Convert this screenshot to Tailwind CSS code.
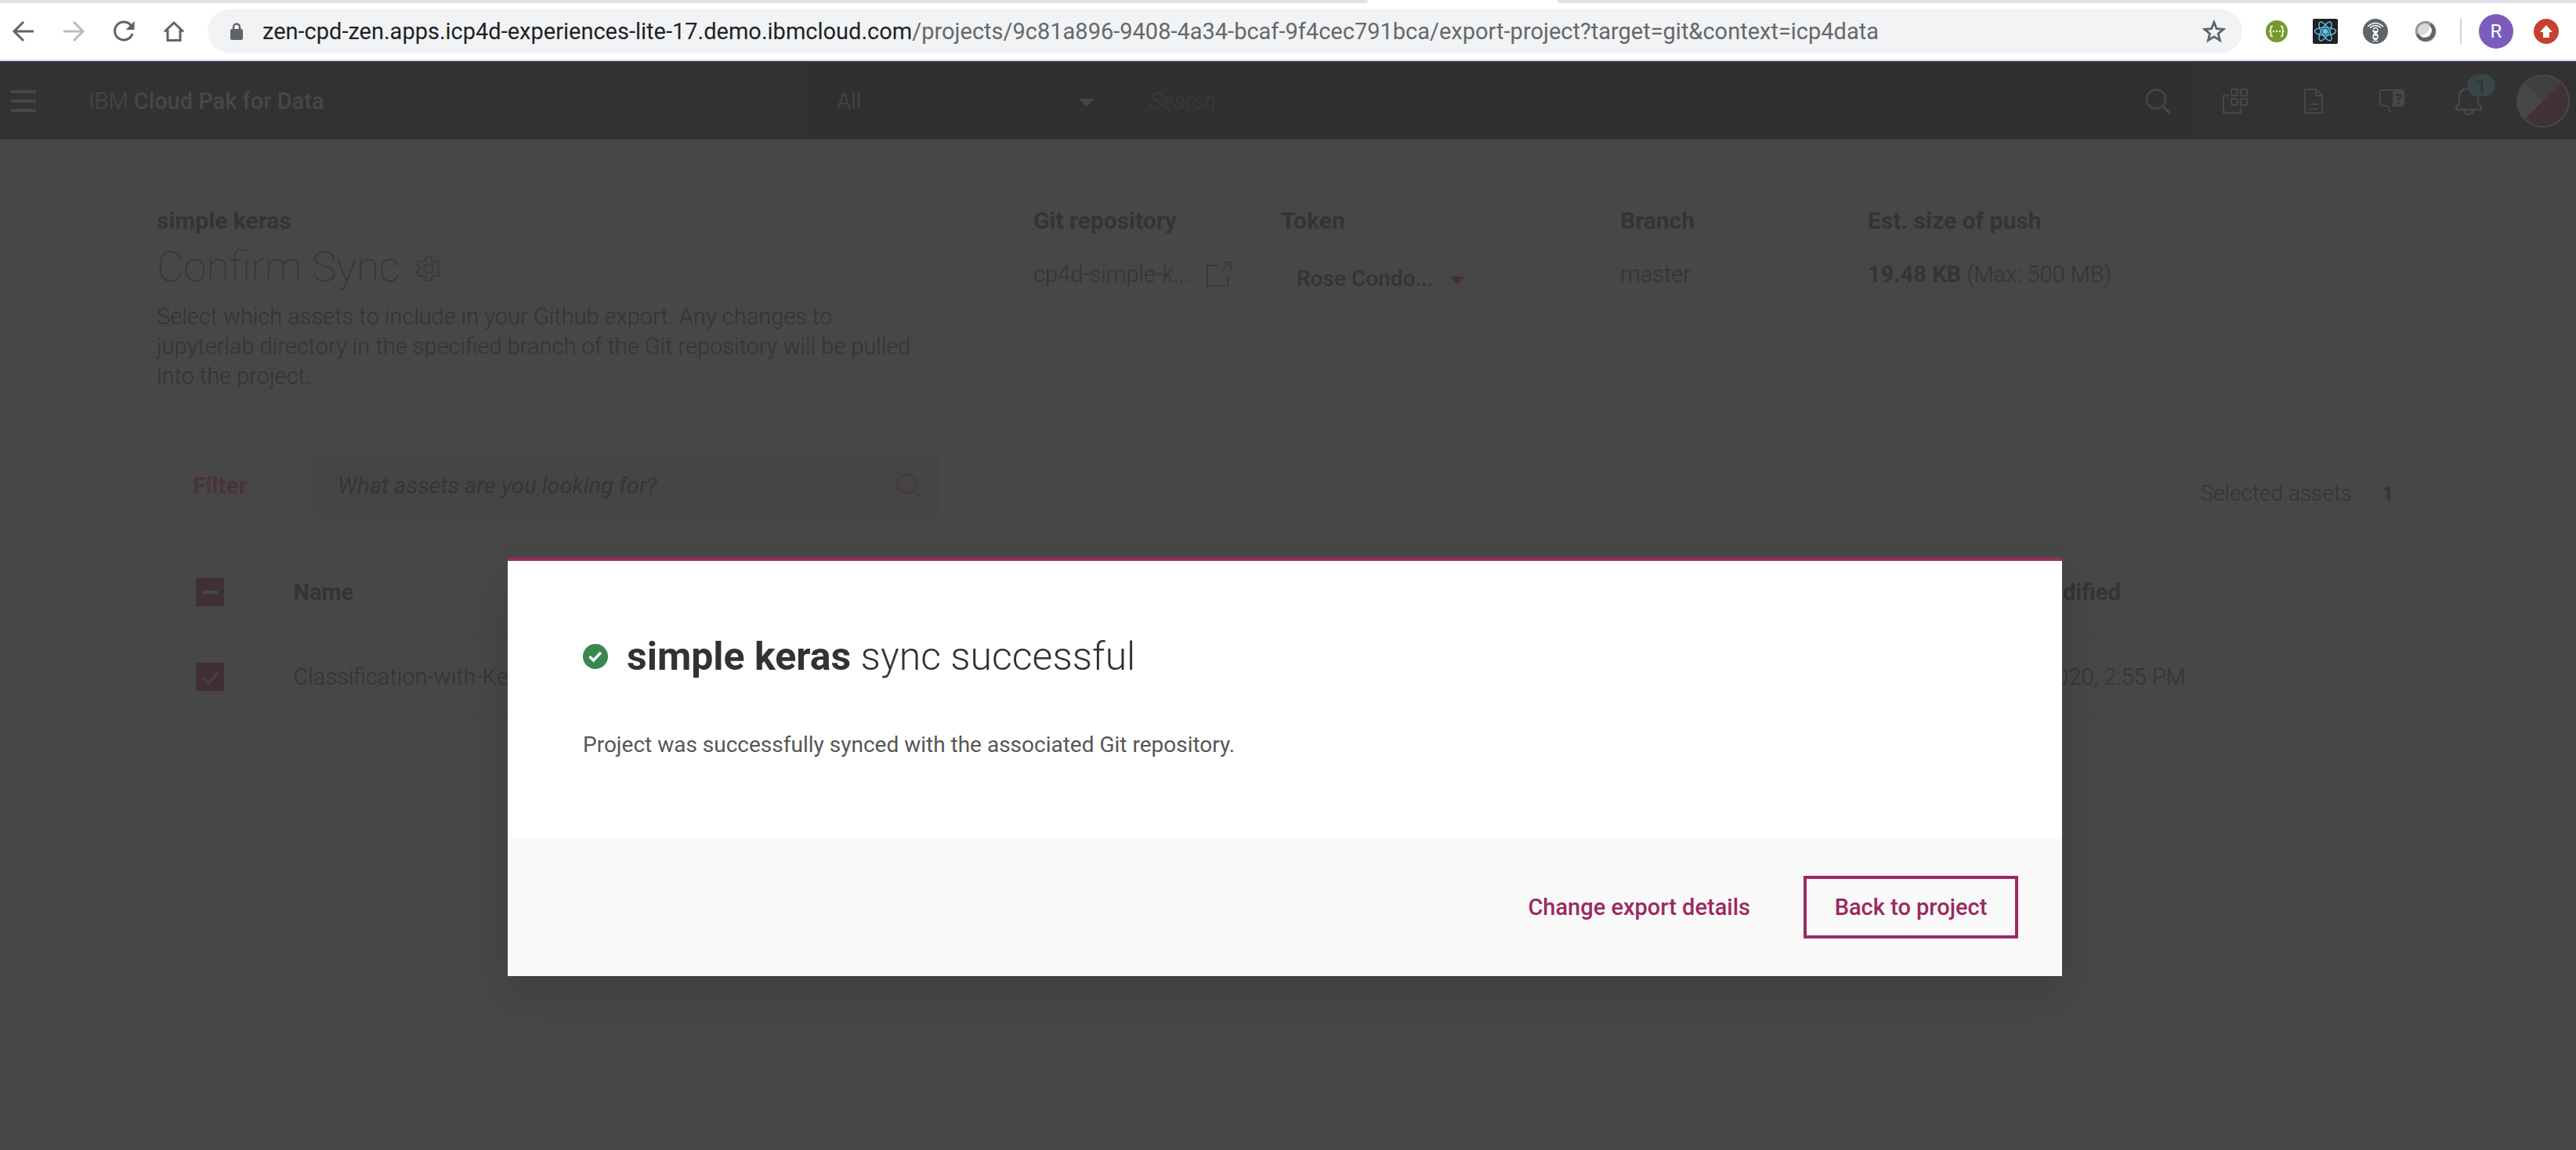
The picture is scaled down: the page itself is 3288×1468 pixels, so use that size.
<!DOCTYPE html>
<html lang="en">
<head>
<meta charset="utf-8">
<title>Confirm Sync - IBM Cloud Pak for Data</title>
<script src="https://cdn.jsdelivr.net/npm/@tailwindcss/browser@4"></script>
</head>
<body class="flex min-h-screen flex-col bg-[#474747] font-['Roboto','Noto_Sans',sans-serif] text-[29px] leading-[38px] text-[#343434]">

<!-- Browser toolbar -->
<div class="flex h-1 bg-white">
  <div class="grow-[1746] basis-0 rounded-br-lg bg-[#dee1e6]"></div>
  <div class="grow-[242] basis-0"></div>
  <div class="grow-[1300] basis-0 rounded-bl-lg bg-[#dee1e6]"></div>
</div>
<div class="flex h-[74px] items-center border-b-2 border-[#dadce0] bg-white pl-[14px] pr-[22px]">
  <div class="flex items-center gap-8 text-[#5f6368]">
    <button aria-label="Back"><svg class="h-8 w-8" viewBox="0 0 32 32" fill="none" stroke="currentColor" stroke-width="3"><path d="M29 16H5M16 4 4 16l12 12"/></svg></button>
    <button aria-label="Forward" class="text-[#babcbe]"><svg class="h-8 w-8" viewBox="0 0 32 32" fill="none" stroke="currentColor" stroke-width="3"><path d="M3 16h24M16 4l12 12-12 12"/></svg></button>
    <button aria-label="Reload"><svg class="h-8 w-8" viewBox="0 0 32 32" fill="none" stroke="currentColor" stroke-width="3"><path d="M25.500 9A11.500 11.500 0 1 0 27 19"/><path d="M29.500 3v11h-11z" fill="currentColor" stroke="none"/></svg></button>
    <button aria-label="Home"><svg class="h-8 w-8" viewBox="0 0 32 32" fill="none" stroke="currentColor" stroke-width="3"><path d="M4 16.500 16 5l12 11.500M8 14v13.500h16V14"/></svg></button>
  </div>
  <div class="ml-[27px] flex h-14 min-w-0 flex-1 items-center rounded-full bg-[#f1f3f4] pl-[28px] pr-5">
    <svg class="h-6 w-[18px] shrink-0 text-[#5f6368]" viewBox="0 0 18 24" fill="none"><path d="M5 10V6.500a4 4 0 0 1 8 0V10" stroke="currentColor" stroke-width="2.400"/><rect x="1" y="9" width="16" height="14" rx="2" fill="currentColor"/></svg>
    <a href="#" class="ml-6 min-w-0 flex-1 overflow-hidden whitespace-nowrap text-[#65686c]"><span class="text-[#202124]">zen-cpd-zen.apps.icp4d-experiences-lite-17.demo.ibmcloud.com</span>/projects/9c81a896-9408-4a34-bcaf-9f4cec791bca/export-project?target=git&amp;context=icp4data</a>
    <button aria-label="Bookmark"><svg class="h-8 w-8" viewBox="0 0 32 32" fill="none" stroke="#5f6368" stroke-width="2.800"><path d="m16 4.500 3.300 8.200 8.700.6-6.700 5.600 2.200 8.600L16 22.800l-7.500 4.700 2.200-8.600L4 13.300l8.700-.6z"/></svg></button>
  </div>
  <div class="ml-[30px] flex items-center gap-8">
    <svg class="h-8 w-7" viewBox="0 0 28 32" fill="none" stroke="#fff" stroke-width="1.600"><circle cx="14" cy="16" r="14" fill="#76992b" stroke="none"/><path d="M9 9.500H8q-1.500 0-1.500 2v2.500q0 2-2 2 2 0 2 2V20.500q0 2 1.500 2h1M19 9.500h1q1.500 0 1.500 2v2.500q0 2 2 2-2 0-2 2V20.500q0 2-1.500 2h-1"/><path d="M9 16h10" stroke-width="2" stroke-dasharray="2 2"/></svg>
    <svg class="h-8 w-8" viewBox="0 0 32 32" fill="none" stroke="#61c3ea" stroke-width="1.400"><rect width="32" height="32" rx="2" fill="#202122" stroke="none"/><ellipse cx="16" cy="16" rx="13.500" ry="5"/><ellipse cx="16" cy="16" rx="13.500" ry="5" transform="rotate(60 16 16)"/><ellipse cx="16" cy="16" rx="13.500" ry="5" transform="rotate(120 16 16)"/><circle cx="16" cy="16" r="2.800" fill="#61c3ea"/></svg>
    <svg class="h-8 w-8" viewBox="0 0 32 32" fill="none" stroke="#fff" stroke-width="1.500"><circle cx="16" cy="16" r="16" fill="#5f6468" stroke="none"/><path d="M6 10q10-9 20 0M9 11.500q7-6 14 0M13 13q3-3 6 0M13 14q0 3 3 4.500t3 4.500q0 3-6 6M19 14q0 3-3 4.500T13 23q0 3 6 6M13 16h6M13.500 21h5M13.500 25h5"/></svg>
    <svg class="h-8 w-8" viewBox="0 0 32 32"><circle cx="17" cy="17" r="13.500" fill="#e4e4e4"/><circle cx="16" cy="16" r="13" fill="#646464"/><path d="M4 21A13 13 0 0 1 24 6z" fill="#9b9b9b"/><circle cx="15" cy="15" r="9" fill="#dadada"/><path d="M9 21q12-1 12-12l3 5-3 8-8 2z" fill="#fff"/></svg>
  </div>
  <div class="ml-7 flex items-center">
    <span class="h-8 w-[2px] bg-[#cfd1d4]"></span>
    <button class="ml-[22px] h-11 w-11 rounded-full bg-[#7b5cbb] text-[24px] leading-[44px] text-white">R</button>
    <svg class="ml-[26px] h-8 w-8" viewBox="0 0 32 32"><circle cx="16" cy="16" r="16" fill="#c5402f"/><path d="m16 8 8 9h-4v7h-8v-7H8z" fill="#fff"/></svg>
  </div>
</div>

<div class="relative flex flex-1 flex-col border-t border-[#2e4068]">
  <!-- Product header -->
  <header class="flex h-[99px] items-stretch bg-[#323232] text-[#474747]">
    <div class="flex flex-1 items-center pl-[14px]">
      <button aria-label="Menu" class="mr-[67px] flex w-8 flex-col gap-2"><span class="h-1 bg-[#474747]"></span><span class="h-1 bg-[#474747]"></span><span class="h-1 bg-[#474747]"></span></button>
      <a href="#" class="whitespace-nowrap"><span class="font-light">IBM</span> <b class="font-medium">Cloud Pak for Data</b></a>
    </div>
    <div class="flex min-w-0 max-w-[1768px] grow-[1768] basis-0 items-center bg-[#303030]">
      <div class="flex h-full w-[400px] items-center justify-between border-r-2 border-[#323232] pl-[35px] pr-[34px]">
        <select aria-label="Category" class="h-10 flex-1 appearance-none bg-transparent font-light text-[#474747]"><option>All</option></select>
        <svg class="mt-1 h-[10px] w-5" viewBox="0 0 20 10"><path d="M0 0h20L10 10z" fill="#474747"/></svg>
      </div>
      <input type="text" aria-label="Search" placeholder="Search" class="ml-[34px] h-10 min-w-0 flex-1 bg-transparent font-light italic placeholder:text-[#3b3b3b]">
      <button aria-label="Run search" class="mr-[30px]"><svg class="h-8 w-8" viewBox="0 0 32 32" fill="none" stroke="#474747" stroke-width="2.400"><circle cx="13" cy="13.500" r="12"/><path d="m21 22 9.500 9.500" stroke-width="3"/></svg></button>
    </div>
    <div class="flex items-center gap-[68px] pl-[36px] pr-[29px] text-[#474747]">
      <button aria-label="Apps"><svg class="h-8 w-8" viewBox="0 0 32 32" fill="none" stroke="currentColor" stroke-width="2"><rect x="11" y="1" width="8" height="8" rx="1"/><rect x="23" y="1" width="8" height="8" rx="1"/><rect x="11" y="13" width="8" height="8" rx="1"/><rect x="23" y="13" width="8" height="8" rx="1"/><path d="M8 9H1v22h22v-7"/></svg></button>
      <button aria-label="Documents"><svg class="h-8 w-8" viewBox="0 0 32 32" fill="none" stroke="currentColor" stroke-width="2"><path d="M5 1h14l8 8v22H5zM19 1v8h8M10 20h12M10 26h12"/></svg></button>
      <button aria-label="Help"><svg class="h-8 w-8" viewBox="0 0 32 32" fill="none" stroke="currentColor" stroke-width="2"><path d="M17 2H4Q1 2 1 5v14q0 3 3 3h6l5 9"/><path d="M17 1h11q4 0 4 4v14q0 4-4 4H17z" fill="currentColor" stroke="none"/><path d="M21.500 10q0-2.500 3-2.500t3 2.500q0 1.500-3 3v2M24.500 17v2.500" stroke="#323232"/></svg></button>
      <button aria-label="Notifications" class="relative -ml-1"><svg class="h-9 w-9" viewBox="0 0 36 36" fill="none" stroke="currentColor" stroke-width="2.400"><path d="M2 29v-3l4-5v-8q0-11 12-11t12 11v8l4 5v3zM12 29q1 6 6 6t6-6"/></svg><span class="absolute -top-4 left-4 h-7 w-9 rounded-full bg-[#3a4545] text-[24px] leading-8 text-[#303232]">1</span></button>
    </div>
    <button aria-label="Account" class="flex items-center border-l-2 border-[#2f2f2f] pl-3 pr-2"><svg class="h-[68px] w-[68px]" viewBox="0 0 68 68"><circle cx="34" cy="34" r="33" fill="#3f3f3f"/><path d="M34 34 10.700 10.700a33 33 0 0 0 0 46.600z" fill="#474747"/><path d="M34 34 57.300 10.700A33 33 0 0 1 10.700 57.300z" fill="#423139"/><circle cx="34" cy="34" r="33" fill="none" stroke="#474747" stroke-width="2"/></svg></button>
  </header>

  <!-- Page content -->
  <main class="flex-1 border-r-[32px] border-[#464646] pl-[200px] pr-[178px] pt-[85px] font-light">
    <section class="grid grid-cols-[minmax(0,1119fr)_minmax(0,316fr)_minmax(0,433fr)_minmax(0,316fr)_minmax(0,694fr)]">
      <div class="max-w-[980px]">
        <p class="text-[30px] font-bold">simple keras</p>
        <h1 class="mt-[6px] flex items-center gap-5 text-[53px] font-thin leading-[68px]">Confirm Sync
          <svg class="mt-1 h-8 w-8" viewBox="0 0 32 32" fill="none" stroke="#3a3a3a" stroke-width="2"><circle cx="16" cy="16" r="6"/><path d="M13 1h6l1 5 3 1.500 5-1.500 3 5-3.500 3.500v3L31 21l-3 5-5-1.500-3 1.500-1 5h-6l-1-5-3-1.500L4 26l-3-5 3.500-3.500v-3L1 11l3-5 5 1.500L12 6z"/></svg></h1>
        <p class="mt-[10px]">Select which assets to include in your Github export. Any changes to<br>jupyterlab directory in the specified branch of the Git repository will be pulled<br>into the project.</p>
      </div>
      <div>
        <h2 class="text-[30px] font-bold">Git repository</h2>
        <div class="mt-[30px] flex items-center gap-[22px] whitespace-nowrap"><a href="#">cp4d-simple-k...</a>
          <svg class="h-8 w-8" viewBox="0 0 32 32" fill="none" stroke="#383a3d" stroke-width="2"><path d="M16 5H1v26h26V18M21 1h10v10M31 1 18 13"/></svg></div>
      </div>
      <div>
        <label for="token" class="block text-[30px] font-bold">Token</label>
        <div class="mt-9 flex items-center gap-5 pl-5"><select id="token" class="w-[175px] appearance-none bg-transparent text-[28px] font-medium"><option>Rose Condo...</option></select>
          <svg class="mt-1 h-[10px] w-5" viewBox="0 0 20 10"><path d="M0 0h20L10 10z" fill="#44303a"/></svg></div>
      </div>
      <div>
        <h2 class="text-[30px] font-bold">Branch</h2>
        <p class="mt-[30px]">master</p>
      </div>
      <div>
        <h2 class="text-[30px] font-bold">Est. size of push</h2>
        <p class="mt-[30px]"><b class="font-bold">19.48 KB</b> (Max: 500 MB)</p>
      </div>
    </section>

    <section class="mt-[81px] flex h-20 items-center pl-[46px]">
      <button class="w-[155px] text-left text-[30px] font-bold text-[#4a323d]">Filter</button>
      <div class="flex h-20 w-[798px] items-center rounded bg-[#454545] pl-[30px] pr-[23px]">
        <input type="text" aria-label="Find assets" placeholder="What assets are you looking for?" class="min-w-0 flex-1 bg-transparent font-normal italic placeholder:text-[#363636]">
        <button aria-label="Find"><svg class="h-8 w-8" viewBox="0 0 32 32" fill="none" stroke="#4a363f" stroke-width="2"><circle cx="13.500" cy="13.500" r="12"/><path d="m22 22 9 9"/></svg></button>
      </div>
      <div class="ml-auto mt-5 flex items-center gap-[18px] pr-[2px] text-[28px]">Selected assets
        <span class="h-11 w-14 rounded-full bg-[#464646] text-center text-[24px] font-bold leading-[44px]">1</span></div>
    </section>

    <table class="mt-[35px] w-full table-fixed border border-[#444] text-left">
      <thead>
        <tr class="h-[120px] border-b border-[#444]">
          <th class="w-[174px] pl-[49px]"><div class="grid h-9 w-9"><input type="checkbox" aria-label="Select all" checked class="col-start-1 row-start-1 h-9 w-9 appearance-none bg-[#402f37]"><svg class="pointer-events-none col-start-1 row-start-1 h-9 w-9" viewBox="0 0 36 36"><path d="M8 16h20v4H8z" fill="#474747"/></svg></div></th>
          <th class="font-bold">Name</th>
          <th class="w-[549px] font-bold">Last modified</th>
        </tr>
      </thead>
      <tbody>
        <tr class="h-24">
          <td class="pl-[49px]"><div class="grid h-9 w-9"><input type="checkbox" aria-label="Select Classification-with-Keras" checked class="col-start-1 row-start-1 h-9 w-9 appearance-none bg-[#402f37]"><svg class="pointer-events-none col-start-1 row-start-1 h-9 w-9" viewBox="0 0 36 36" fill="none" stroke="#474747" stroke-width="2.500"><path d="m9 19 7 7 12-13"/></svg></div></td>
          <td>Classification-with-Keras</td>
          <td>Apr 7, 2020, 2:55 PM</td>
        </tr>
      </tbody>
    </table>
  </main>

  <!-- Confirmation dialog -->
  <div class="absolute inset-0 flex items-start justify-center pr-2 pt-[633px]">
    <div role="dialog" aria-modal="true" aria-labelledby="dialog-title" class="w-full max-w-[1984px] border-t-4 border-[#9b2a5f] bg-white shadow-[0_24px_48px_rgba(0,0,0,0.12)]">
      <div class="px-24 pb-[100px] pt-[90px]">
        <h2 id="dialog-title" class="flex items-center gap-6 text-[50px] leading-[64px] text-[#323232]"><svg class="h-8 w-8" viewBox="0 0 32 32"><circle cx="16" cy="16" r="16" fill="#3a8750"/><path d="m8.500 16 5 5L23 11" fill="none" stroke="#fff" stroke-width="3.500"/></svg><span><b class="font-bold">simple keras</b> <span class="font-light">sync successful</span></span></h2>
        <p class="mt-[62px] text-[28px] text-[#565656]">Project was successfully synced with the associated Git repository.</p>
      </div>
      <div class="flex h-44 items-center justify-end gap-[68px] bg-[#f9f9f9] pr-14 font-medium text-[#9b2a5f]">
        <button>Change export details</button>
        <button class="h-20 w-[274px] border-4 border-[#9b2a5f]">Back to project</button>
      </div>
    </div>
  </div>
</div>
</body>
</html>
